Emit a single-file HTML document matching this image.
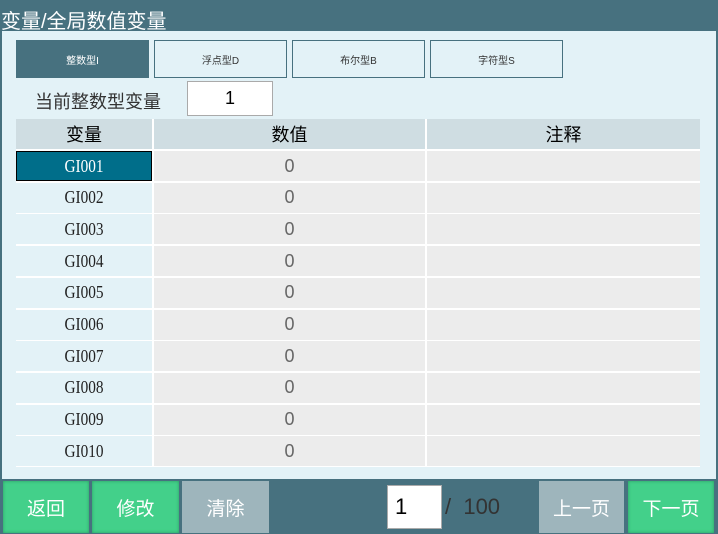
<!DOCTYPE html>
<html><head><meta charset="utf-8"><style>
*{margin:0;padding:0;box-sizing:border-box}
body{width:718px;height:534px;overflow:hidden;background:#47717f;font-family:"Liberation Sans","Noto Sans CJK SC",sans-serif;position:relative}
.a{position:absolute}
.main{left:2px;top:31px;width:714px;height:448px;background:#e3f2f7}
.title{left:1px;top:5px;color:#fff;font-size:20px}
.tab{top:40px;height:38px;border:1px solid #47717f;font-size:10px;display:flex;align-items:center;justify-content:center;color:#333}
.cell{display:flex;align-items:center;justify-content:center;font-size:18px}
.btn{top:481px;height:52px;display:flex;align-items:center;justify-content:center;color:#fff;font-size:19px}
.g{background:#43d08a;box-shadow:inset 0 0 3px #2a9a60}
.gr{background:#9eb5bc}
.gi{font-family:'Liberation Serif',serif;transform:scaleX(0.85)}
</style></head><body>
<div class="a main"></div>
<div class="a" style="left:16px;top:119px;width:684px;height:348px;background:#fff"></div>
<div class="a title">变量/全局数值变量</div>
<div class="a tab" style="left:16px;width:133px;background:#47717f;color:#fff">整数型I</div>
<div class="a tab" style="left:154px;width:133px">浮点型D</div>
<div class="a tab" style="left:292px;width:133px">布尔型B</div>
<div class="a tab" style="left:430px;width:133px">字符型S</div>
<div class="a" style="left:35px;top:88px;font-size:18px;color:#333">当前整数型变量</div>
<div class="a cell" style="left:187px;top:81px;width:86px;height:35px;background:#fff;border:1px solid #aaa;color:#000">1</div>
<div class="a cell" style="left:16px;top:119px;width:136px;height:30px;background:#cfdde2">变量</div>
<div class="a cell" style="left:154px;top:119px;width:271px;height:30px;background:#cfdde2">数值</div>
<div class="a cell" style="left:427px;top:119px;width:273px;height:30px;background:#cfdde2">注释</div>
<div id="rows"></div>
<script>
var h='';for(var i=0;i<10;i++){var t=151+i*31.7;var n='GI0'+(i<9?'0'+(i+1):'10');
var sel=i==0;
h+='<div class="a cell" style="left:16px;top:'+t+'px;width:136px;height:30px;'+(sel?'background:#006e8a;color:#fff;border:1px solid #000':'background:#e3f2f7;color:#222')+'"><span class="gi">'+n+'</span></div>';
h+='<div class="a cell" style="left:154px;top:'+t+'px;width:271px;height:30px;background:#ececec;color:#666">0</div>';
h+='<div class="a" style="left:427px;top:'+t+'px;width:273px;height:30px;background:#ececec"></div>';}
document.getElementById('rows').innerHTML=h;
</script>
<div class="a btn g" style="left:3px;width:86px">返回</div>
<div class="a btn g" style="left:92px;width:87px">修改</div>
<div class="a btn gr" style="left:182px;width:87px">清除</div>
<div class="a" style="left:387px;top:485px;width:55px;height:44px;background:#fff;border:1px solid #aaa;font-size:22px;padding:8px 0 0 7px;color:#000">1</div>
<div class="a" style="left:445px;top:494px;font-size:22px;color:#333">/ &nbsp;100</div>
<div class="a btn gr" style="left:539px;width:85px">上一页</div>
<div class="a btn g" style="left:628px;width:86px">下一页</div>
</body></html>
